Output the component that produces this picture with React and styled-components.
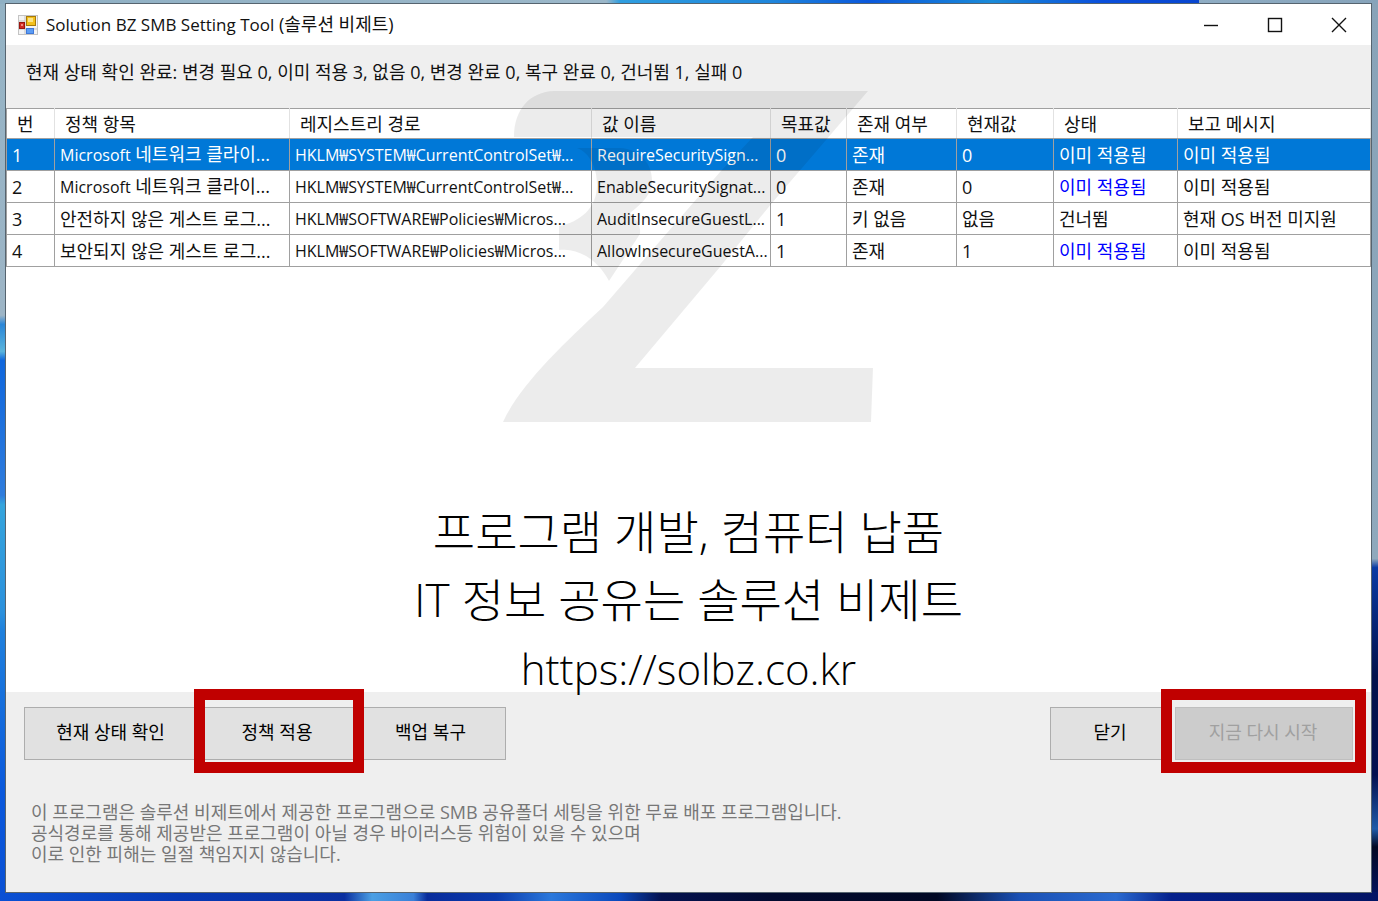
import React, { useState } from 'react';
import styled, { createGlobalStyle } from 'styled-components';

const GlobalStyle = createGlobalStyle`
    * {
        box-sizing: border-box;
    }

    body {
        margin: 0;
        font-family: 'Open Sans', 'Noto Sans CJK KR', sans-serif;
        font-size: 18px;
        color: #111;
    }
`;

const Desktop = styled.div`
    min-height: 100vh;
    display: flex;
    padding: 3px 6px 8px 5px;
    background:
        linear-gradient(90deg, #8fb0c4 0, #9bb7c9 44%, #2f9ee0 45%, #1f86dc 56%, #0a58dc 63%, #1a8ad8 72%, #0a4fdc 80%, #0846d0 87%, #8fadc4 87%, #86a3ba 100%) top / 100% 4px no-repeat,
        linear-gradient(90deg, #0a50d4 0, #0638b4 13%, #0a2fa0 25%, #4a9fe4 27%, #3a80d8 30%, #082c9c 31%, #0a3aac 36%, #2a78dc 40%, #0a48bc 45%, #041250 48%, #020a30 56%, #010824 68%, #1a50b4 74%, #2a6ad0 81%, #04208c 85%, #031464 100%) bottom / 100% 9px no-repeat,
        linear-gradient(180deg, #94b3c5 0, #9db5c6 35%, #2a86d8 36%, #5ab4dc 39%, #0f66dc 40%, #2f7cdc 55%, #35a4dc 56%, #2b90dc 68%, #1f80dc 70%, #0a58dc 88%, #0a50d4 100%) left / 6px 100% no-repeat,
        linear-gradient(180deg, #88a3b8 0, #8fa9bc 62%, #0a3aa4 63%, #02124c 75%, #021050 86%, #1f5aa8 92%, #020824 94%, #031464 100%) right / 7px 100% no-repeat,
        #0a50d4;
`;

const Window = styled.main`
    flex: 1;
    min-width: 0;
    display: flex;
    flex-direction: column;
    position: relative;
    background-color: white;
    border: 1px solid #56646f;
`;

const TitleBar = styled.header`
    display: flex;
    align-items: center;
    height: 41px;
    padding-left: 12px;
    gap: 8px;
`;

const Title = styled.h1`
    flex: 1;
    margin: 0;
    font-size: 18px;
    font-weight: 400;
    line-height: 24px;
    white-space: nowrap;
`;

const Latin = styled.span`
    font-size: ${({ $large }) => ($large ? '17px' : '16px')};
`;

const Controls = styled.div`
    display: flex;
    align-self: stretch;
`;

const ControlButton = styled.button`
    width: 64px;
    padding: 0;
    display: flex;
    align-items: center;
    justify-content: center;
    border: none;
    background: none;

    svg {
        fill: none;
        stroke: #111;
        stroke-width: 1.4;
    }
`;

const StatusLine = styled.p`
    margin: 0;
    padding: 15px 20px 24px;
    line-height: 24px;
    background-color: #efefef;
`;

const PolicyTable = styled.table`
    width: 100%;
    table-layout: fixed;
    border-collapse: collapse;
    border: 1px solid #a0a0a0;
`;

const HeadCell = styled.th`
    height: 30px;
    padding: 0 10px;
    font-weight: 400;
    text-align: left;
    line-height: 24px;
    white-space: nowrap;
    border-right: 1px solid #e2e2e2;
    border-bottom: 1px solid #a0a0a0;
`;

const Row = styled.tr`
    color: ${({ $selected }) => ($selected ? 'white' : '#111')};
    background-color: ${({ $selected }) => ($selected ? '#0078d7' : 'white')};
`;

const Cell = styled.td`
    height: 32px;
    padding: 0 0 0 5px;
    overflow: hidden;
    line-height: 24px;
    white-space: nowrap;
    color: ${({ $applied }) => ($applied ? '#0000ff' : 'inherit')};
    border: 1px solid #a0a0a0;
`;

const Watermark = styled.svg`
    position: absolute;
    top: 87px;
    left: 36.4%;
    width: 370px;
    height: 332px;
    fill: rgba(0, 0, 0, 0.073);
    pointer-events: none;
`;

const Content = styled.section`
    flex: 1;
    display: flex;
    flex-direction: column;
    justify-content: flex-end;
    position: relative;
`;

const Slogan = styled.p`
    margin: 0 0 -11px;
    color: black;
    font-size: 46px;
    font-weight: 300;
    line-height: 68px;
    text-align: center;
`;

const SiteLink = styled.a`
    color: inherit;
    font-size: 42px;
    text-decoration: none;
`;

const Footer = styled.footer`
    padding: 15px 18px 27px;
    background-color: #efefef;
`;

const ButtonRow = styled.div`
    display: flex;
    gap: 3px;
`;

const Spacer = styled.div`
    flex: 1;
`;

const Marked = styled.div`
    display: flex;
    position: relative;

    &::after {
        content: '';
        position: absolute;
        inset: ${({ $inset }) => $inset};
        border: 11px solid #c00000;
        pointer-events: none;
        z-index: 1;
    }
`;

const ActionButton = styled.button`
    width: ${({ $width }) => $width}px;
    height: 53px;
    padding: 0 2px 6px 0;
    font-family: inherit;
    font-size: 18px;
    color: black;
    background-color: #e1e1e1;
    border: 1px solid #adadad;

    &:disabled {
        color: #a0a0a0;
        background-color: #cccccc;
        border-color: #bfbfbf;
    }
`;

const Notice = styled.p`
    margin: 42px 0 0;
    padding: 0 7px;
    color: #777;
    line-height: 21px;
`;

const columns = [
    { title: '번', width: '48px' },
    { title: '정책 항목', width: '235px' },
    { title: '레지스트리 경로', width: '302px' },
    { title: '값 이름', width: '179px' },
    { title: '목표값', width: '76px' },
    { title: '존재 여부', width: '110px' },
    { title: '현재값', width: '97px' },
    { title: '상태', width: '124px' },
    { title: '보고 메시지', width: 'auto' },
];

const policies = [
    ['1', <><Latin>Microsoft</Latin> 네트워크 클라이...</>, <Latin>HKLM₩SYSTEM₩CurrentControlSet₩...</Latin>, <Latin>RequireSecuritySign...</Latin>, '0', '존재', '0', '이미 적용됨', '이미 적용됨'],
    ['2', <><Latin>Microsoft</Latin> 네트워크 클라이...</>, <Latin>HKLM₩SYSTEM₩CurrentControlSet₩...</Latin>, <Latin>EnableSecuritySignat...</Latin>, '0', '존재', '0', '이미 적용됨', '이미 적용됨'],
    ['3', '안전하지 않은 게스트 로그...', <Latin>HKLM₩SOFTWARE₩Policies₩Micros...</Latin>, <Latin>AuditInsecureGuestL...</Latin>, '1', '키 없음', '없음', '건너뜀', '현재 OS 버전 미지원'],
    ['4', '보안되지 않은 게스트 로그...', <Latin>HKLM₩SOFTWARE₩Policies₩Micros...</Latin>, <Latin>AllowInsecureGuestA...</Latin>, '1', '존재', '1', '이미 적용됨', '이미 적용됨'],
];

const STATUS_COLUMN = 7;

function AppIcon() {
    return (
        <svg width="20" height="20" viewBox="0 0 20 20" aria-hidden="true">
            <rect x="0.5" y="0.5" width="19" height="19" fill="#f4f4f4" stroke="#c4c4c4" />
            <path d="M7 1v18M1 6h6M1 14h18" stroke="#c4c4c4" fill="none" />
            <rect x="1.5" y="7.5" width="5" height="6" fill="#cf2a22" stroke="#9a1610" />
            <rect x="3" y="9" width="2" height="2" fill="#f08a80" />
            <rect x="8.5" y="1.5" width="9" height="9" fill="#f3c01c" stroke="#a87a08" />
            <rect x="10" y="3" width="5" height="4" fill="#fbe488" />
            <rect x="8.5" y="13.5" width="7" height="5" fill="#5b9cf4" stroke="#3f78d8" />
        </svg>
    );
}

function WindowControls() {
    return (
        <Controls>
            <ControlButton type="button" aria-label="최소화">
                <svg width="16" height="16"><path d="M1 8.5h14" /></svg>
            </ControlButton>
            <ControlButton type="button" aria-label="최대화">
                <svg width="16" height="16"><rect x="1.5" y="1.5" width="13" height="13" /></svg>
            </ControlButton>
            <ControlButton type="button" aria-label="창 닫기">
                <svg width="16" height="16"><path d="M1 1l14 14M15 1L1 15" /></svg>
            </ControlButton>
        </Controls>
    );
}

function PolicyGrid() {
    const [selectedRow, setSelectedRow] = useState(0);

    return (
        <PolicyTable>
            <colgroup>
                {columns.map(({ title, width }) => <col key={title} style={{ width }} />)}
            </colgroup>
            <thead>
                <tr>
                    {columns.map(({ title }) => <HeadCell key={title} scope="col">{title}</HeadCell>)}
                </tr>
            </thead>
            <tbody>
                {policies.map((policy, row) => (
                    <Row key={policy[0]} $selected={row === selectedRow} onClick={() => setSelectedRow(row)}>
                        {policy.map((value, index) => (
                            <Cell key={index} $applied={index === STATUS_COLUMN && value === '이미 적용됨' && row !== selectedRow}>
                                {value}
                            </Cell>
                        ))}
                    </Row>
                ))}
            </tbody>
        </PolicyTable>
    );
}

function App() {
    return (
        <Desktop>
            <GlobalStyle />
            <Window>
                <TitleBar>
                    <AppIcon />
                    <Title><Latin $large>Solution BZ SMB Setting Tool</Latin> (솔루션 비제트)</Title>
                    <WindowControls />
                </TitleBar>
                <StatusLine>현재 상태 확인 완료: 변경 필요 0, 이미 적용 3, 없음 0, 변경 완료 0, 복구 완료 0, 건너뜀 1, 실패 0</StatusLine>
                <PolicyGrid />
                <Watermark viewBox="503 91 370 332" aria-hidden="true">
                    <path d="M868 91H554C530 92 514 109 514 137H753L720 172L660 241L603 307C562 345 520 385 503 422H871L873 368H635L720 267L772 203Z" />
                    <path d="M577 148H620C640 149 652 164 652 180C652 194 643 203 630 213C637 220 641 225 640 234L609 281C600 263 580 247 559 250V226C580 222 597 208 597 185C597 168 590 153 577 148Z" />
                </Watermark>
                <Content>
                    <Slogan>
                        프로그램 개발, 컴퓨터 납품<br />
                        IT 정보 공유는 솔루션 비제트<br />
                        <SiteLink href="https://solbz.co.kr">https://solbz.co.kr</SiteLink>
                    </Slogan>
                </Content>
                <Footer>
                    <ButtonRow>
                        <ActionButton type="button" $width={175}>현재 상태 확인</ActionButton>
                        <Marked $inset="-18px -10px -13px -8px">
                            <ActionButton type="button" $width={152}>정책 적용</ActionButton>
                        </Marked>
                        <ActionButton type="button" $width={149}>백업 복구</ActionButton>
                        <Spacer />
                        <ActionButton type="button" $width={122}>닫기</ActionButton>
                        <Marked $inset="-18px -13px -13px -14px">
                            <ActionButton type="button" $width={178} disabled>지금 다시 시작</ActionButton>
                        </Marked>
                    </ButtonRow>
                    <Notice>
                        이 프로그램은 솔루션 비제트에서 제공한 프로그램으로 SMB 공유폴더 세팅을 위한 무료 배포 프로그램입니다.<br />
                        공식경로를 통해 제공받은 프로그램이 아닐 경우 바이러스등 위험이 있을 수 있으며<br />
                        이로 인한 피해는 일절 책임지지 않습니다.
                    </Notice>
                </Footer>
            </Window>
        </Desktop>
    );
}

export default App;
